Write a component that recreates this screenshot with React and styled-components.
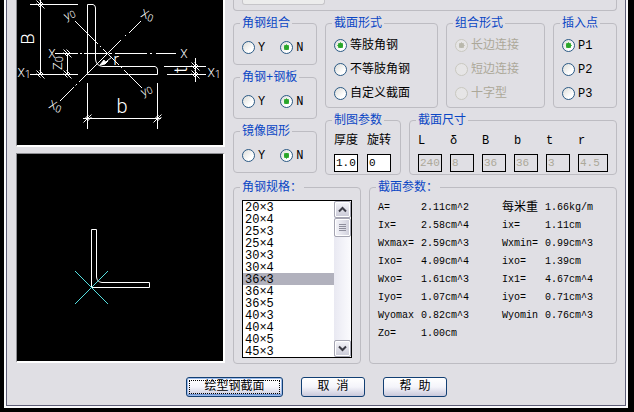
import React, { useState } from "react";
import styled, { createGlobalStyle, css } from "styled-components";

const face = "#e0dfe4";
const line = "#bdbcc2";
const cjk = '"Liberation Mono", "Noto Sans CJK SC", monospace';

const GlobalStyle = createGlobalStyle`
  * { box-sizing: border-box; }
  body {
    margin: 0;
    background: #000;
    color: #000;
    font: 12px/14px ${cjk};
  }
  button, input, select { font: inherit; color: inherit; }
`;

const Dialog = styled.form`
  margin: 0 6px 4px 4px;
  padding: 0 9px 9px 10px;
  background: ${face};
  border: 1px solid #fbfbfd;
  border-width: 0 2px 2px;
  box-shadow: inset 1px 0 #5f5f78, inset -1px 0 #5f5f78, inset 0 -1px #5f5f78;
`;

const Body = styled.div`
  display: flex;
  gap: 8px;
`;

const Previews = styled.div`
  flex: 0 0 209px;
  display: flex;
  flex-direction: column;
  gap: 6px;
`;

const Preview = styled.div`
  background: #000;
  border: 1px solid #8d8d92;
  border-width: 1px 2px 2px 1px;
  border-right-color: #fff;
  border-bottom-color: #fff;
  ${(p) => p.$cut && css`border-top: 0;`}
  svg { display: block; width: 100%; height: auto; }
`;

const Settings = styled.div`
  flex: 1;
  min-width: 0;
  display: flex;
  flex-direction: column;
  gap: 5px;
`;

const TopGroup = styled.div`
  height: 11px;
  padding-left: 8px;
  border: 1px solid ${line};
  border-top: 0;
  border-radius: 0 0 4px 4px;
`;

const TopField = styled.div`
  width: 83px;
  height: 5px;
  background: #ececec;
  border: 1px solid #c6c5c9;
  border-top: 0;
  border-radius: 0 0 3px 3px;
`;

const Row = styled.div`
  display: grid;
  grid-template-columns: ${(p) => p.$cols.map((n) => `minmax(0, ${n}fr)`).join(" ")};
  gap: 8px;
  align-items: ${(p) => p.$align || "stretch"};
`;

const Stack = styled.div`
  display: flex;
  flex-direction: column;
  gap: 5px;
`;

const Group = styled.fieldset`
  margin: 0;
  padding: ${(p) => p.$pad || "8px 8px 7px"};
  min-width: 0;
  border: 1px solid ${line};
  border-radius: 4px;
`;

const Legend = styled.legend`
  margin-left: -2px;
  padding: 0 2px;
  height: 14px;
  line-height: 16px;
  color: #0a46c4;
  white-space: nowrap;
`;

const Options = styled.div`
  display: flex;
  flex-direction: ${(p) => (p.$inline ? "row" : "column")};
  gap: ${(p) => (p.$inline ? "15px" : "10px")};
`;

const RadioLabel = styled.label`
  display: flex;
  align-items: center;
  gap: 3px;
  height: 14px;
  white-space: nowrap;
  color: ${(p) => (p.$disabled ? "#aca899" : "#000")};
`;

const RadioText = styled.span`
  padding-top: 2px;
`;

const RadioInput = styled.input.attrs({ type: "radio" })`
  appearance: none;
  flex: none;
  width: 13px;
  height: 13px;
  margin: 0;
  border: 1px solid #2b5a85;
  border-radius: 50%;
  background: linear-gradient(135deg, #dcdcd8, #fff 70%);
  &:checked {
    background: radial-gradient(circle, #2aa52a 0 2px, #6cc96c 3px, transparent 3px),
      linear-gradient(135deg, #dcdcd8, #fff 70%);
  }
  &:disabled { border-color: #c9c8c0; background: #e6e5e6; }
  &:disabled:checked {
    background: radial-gradient(circle, #b9b8ac 0 2px, #c9c8c0 3px, transparent 3px), #e6e5e6;
  }
`;

const Fields = styled.div`
  display: flex;
  gap: ${(p) => p.$gap};
`;

const Field = styled.label`
  display: flex;
  flex-direction: column;
  gap: 5px;
  width: ${(p) => (p.$wide ? "30px" : "24px")};
  line-height: 16px;
  white-space: nowrap;
`;

const TextBox = styled.input`
  width: 100%;
  height: 18px;
  margin: 0;
  padding: 0 0 0 1px;
  border: 1px solid #000;
  border-radius: 0;
  background: #fff;
  font-size: 11px;
  &:disabled { background: ${face}; color: #aca899; }
`;

const ListFrame = styled.div`
  display: flex;
  height: 158px;
  border: 1px solid #000;
  background: #fff;
`;

const List = styled.select`
  flex: 1;
  min-width: 0;
  height: 156px;
  margin: 0;
  padding: 0;
  border: 0;
  border-radius: 0;
  outline: 0;
  overflow: hidden;
  background: #fff;
  option {
    height: 12px;
    min-height: 12px;
    padding: 0 0 0 2px;
    line-height: 12px;
    color: #000;
  }
  option:checked { background: linear-gradient(#b1b1bd, #b1b1bd); color: #000; }
`;

const ScrollBar = styled.div`
  flex: 0 0 17px;
  display: flex;
  flex-direction: column;
  background: linear-gradient(90deg, #e9e9f2, #fbfbfe);
`;

const ScrollButton = styled.button`
  display: grid;
  place-items: center;
  height: 17px;
  padding: 0;
  border: 1px solid #a5a5b2;
  border-radius: 2px;
  box-shadow: inset 0 0 0 1px #fff;
  background: linear-gradient(#f5f5fa, #c9c9d6);
`;

const Thumb = styled.div`
  display: grid;
  place-items: center;
  height: 19px;
  margin-bottom: auto;
  border: 1px solid #a5a5b2;
  border-radius: 2px;
  box-shadow: inset 0 0 0 1px #fff;
  background: linear-gradient(90deg, #f5f5fa, #cfcfdb);
`;

const Params = styled.table`
  width: 100%;
  table-layout: fixed;
  border-collapse: collapse;
  font-size: 10px;
  th, td {
    height: 18px;
    padding: 2px 0 0;
    text-align: left;
    font-weight: normal;
    white-space: nowrap;
  }
`;

const NameCol = styled.col`
  width: 43px;
`;

const ValueCol = styled.col`
  width: 81px;
`;

const CjkName = styled.span`
  font-size: 12px;
`;

const Actions = styled.div`
  display: flex;
  justify-content: center;
  gap: 18px;
  margin-top: 13px;
`;

const Button = styled.button`
  width: ${(p) => (p.$primary ? "97px" : "64px")};
  height: 20px;
  padding: 0;
  line-height: 16px;
  border: 1px solid #123f73;
  border-radius: 3px;
  background: linear-gradient(#fff, #f4f4fa 50%, #c9c9dc);
  ${(p) =>
    p.$primary &&
    css`
      box-shadow: inset 0 0 0 1px #9dbbea, inset 0 -2px #6c92d2;
      outline: 1px dotted #000;
      outline-offset: -4px;
    `}
`;

const Sketch = styled.svg`
  fill: none;
  stroke: #fff;
  text {
    fill: #fff;
    stroke: none;
    font-family: Roboto, sans-serif;
    font-weight: 300;
    text-anchor: middle;
  }
`;

function Radio({ text, name, checked, disabled }) {
  return (
    <RadioLabel $disabled={disabled}>
      <RadioInput name={name} defaultChecked={checked} disabled={disabled} />
      <RadioText>{text}</RadioText>
    </RadioLabel>
  );
}

function YesNo({ title, name }) {
  return (
    <Group $pad="10px 8px">
      <Legend>{title}</Legend>
      <Options $inline>
        <Radio text="Y" name={name} />
        <Radio text="N" name={name} checked />
      </Options>
    </Group>
  );
}

function Choice({ title, name, items, disabled }) {
  return (
    <Group>
      <Legend>{title}</Legend>
      <Options>
        {items.map((t, i) => (
          <Radio key={t} text={t} name={name} checked={i === 0} disabled={disabled} />
        ))}
      </Options>
    </Group>
  );
}

function Fig({ x, y, size, turn = 0, children, sub }) {
  return (
    <text transform={`translate(${x} ${y}) rotate(${turn})`} fontSize={size}>
      {children}
      {sub && <tspan fontSize={size - 2} dy="1">{sub}</tspan>}
    </text>
  );
}

function DimensionSketch() {
  const ticks = [[40.5, 4.5], [40.5, 74.5], [67.5, 53.5], [67.5, 74.5], [195.5, 66.5], [195.5, 74.5]];
  return (
    <Sketch viewBox="17 0 206 145" role="img" aria-label="角钢尺寸示意图">
      <path d="M87.5 74.5V4.5H93Q95.5 5 95.5 8V59Q96 66 103 66.5H155Q157.5 67 157.5 70V74.5Z" />
      <path d="M40.5 0V74.5M30 4.5H78M30 74.5H78M67.5 53V75M164 66.5H206M167 74.5H206M195.5 58V82M83 118.5H161M87.5 83V129M157.5 83V129" />
      <path d="M55 53.5H78M80 53.5H82M84 53.5H107M109 53.5H112M115 53.5H147M150 53.5H152M156 53.5H176" />
      <path d="M60 101L74 87M75.500 85.500L77 84M79 82L121 40M125 36L126 35M129 33L141 21M75 21L98 44M100 46L101 47M103 49L119 65M121 67L122 68M124 70L142 88" />
      {ticks.map(([x, y]) => (
        <path key={`${x},${y}`} d={`M${x - 4} ${y - 4}l8 8M${x - 1} ${y - 4}l4 4M${x - 4} ${y - 1}l4 4`} />
      ))}
      {[87.5, 157.5].map((x) => (
        <path key={x} d={`M${x - 4} 122.500l8 -8M${x - 3} 119l4 -4M${x} 121l4 -4`} />
      ))}
      <path d="M100 65L104 60L105 62L108 61L105 64Z" fill="#fff" />
      <path d="M107 61L112 57" />
      <Fig x={34} y={39} size={19} turn={-90}>B</Fig>
      <Fig x={122} y={113} size={20}>b</Fig>
      <Fig x={116} y={65} size={17}>r</Fig>
      <Fig x={187} y={70} size={19} turn={-90}>t</Fig>
      <Fig x={52} y={58} size={12}>X</Fig>
      <Fig x={184} y={58} size={12}>X</Fig>
      <Fig x={24} y={77} size={12} sub="1">X</Fig>
      <Fig x={214} y={77} size={12} sub="1">X</Fig>
      <Fig x={62} y={63} size={13} turn={-90} sub="0">Z</Fig>
      <Fig x={54} y={110} size={12} turn={20} sub="0">X</Fig>
      <Fig x={146} y={19} size={12} turn={20} sub="0">X</Fig>
      <Fig x={71} y={18} size={12} turn={-25} sub="0">y</Fig>
      <Fig x={148} y={94} size={12} turn={-25} sub="0">y</Fig>
    </Sketch>
  );
}

function SectionSketch() {
  return (
    <Sketch viewBox="17 154 206 207" role="img" aria-label="截面预览">
      <path d="M91.5 287.5V229.5H96.5V277Q97 282 102 282.500H149.5V287.5Z" />
      <path stroke="#55dfe0" d="M75 271L108 304M108 271L75 304" />
    </Sketch>
  );
}

function Chevron({ down }) {
  return (
    <svg width="9" height="7" viewBox="0 0 9 7" fill="none" stroke="#3c3c46" strokeWidth="2">
      <path d={down ? "M1 1.500L4.500 5L8 1.500" : "M1 5.500L4.500 2L8 5.500"} />
    </svg>
  );
}

const sizes = ["20×3", "20×4", "25×3", "25×4", "30×3", "30×4", "36×3", "36×4", "36×5", "40×3", "40×4", "40×5", "45×3"];

const dimensions = [["L", "240"], ["δ", "8"], ["B", "36"], ["b", "36"], ["t", "3"], ["r", "4.5"]];

const params = [
  ["A=", "2.11cm^2", "每米重", "1.66kg/m"],
  ["Ix=", "2.58cm^4", "ix=", "1.11cm"],
  ["Wxmax=", "2.59cm^3", "Wxmin=", "0.99cm^3"],
  ["Ixo=", "4.09cm^4", "ixo=", "1.39cm"],
  ["Wxo=", "1.61cm^3", "Ix1=", "4.67cm^4"],
  ["Iyo=", "1.07cm^4", "iyo=", "0.71cm^3"],
  ["Wyomax", "0.82cm^3", "Wyomin", "0.76cm^3"],
  ["Zo=", "1.00cm", "", ""],
];

function SizeList() {
  const [index, setIndex] = useState(6);
  const step = (d) => setIndex((i) => Math.min(sizes.length - 1, Math.max(0, i + d)));
  return (
    <Group $pad="6px 8px 5px">
      <Legend>角钢规格：</Legend>
      <ListFrame>
        <List
          size={13}
          aria-label="角钢规格"
          value={sizes[index]}
          onChange={(e) => setIndex(sizes.indexOf(e.target.value))}
        >
          {sizes.map((s) => <option key={s}>{s}</option>)}
        </List>
        <ScrollBar>
          <ScrollButton type="button" aria-label="向上" onClick={() => step(-1)}><Chevron /></ScrollButton>
          <Thumb>
            <svg width="7" height="8" viewBox="0 0 7 8" stroke="#8e8e9c">
              <path d="M0 .5H7M0 2.500H7M0 4.500H7M0 6.500H7" />
            </svg>
          </Thumb>
          <ScrollButton type="button" aria-label="向下" onClick={() => step(1)}><Chevron down /></ScrollButton>
        </ScrollBar>
      </ListFrame>
    </Group>
  );
}

export default function App() {
  return (
    <>
      <GlobalStyle />
      <Dialog onSubmit={(e) => e.preventDefault()}>
        <Body>
          <Previews>
            <Preview $cut><DimensionSketch /></Preview>
            <Preview><SectionSketch /></Preview>
          </Previews>
          <Settings>
            <TopGroup><TopField /></TopGroup>
            <Row $cols={[84, 292]} $align="start">
              <Stack>
                <YesNo title="角钢组合" name="combine" />
                <YesNo title="角钢+钢板" name="plate" />
                <YesNo title="镜像图形" name="mirror" />
              </Stack>
              <Stack>
                <Row $cols={[113, 99, 64]}>
                  <Choice title="截面形式" name="shape" items={["等肢角钢", "不等肢角钢", "自定义截面"]} />
                  <Choice title="组合形式" name="joint" items={["长边连接", "短边连接", "十字型"]} disabled />
                  <Choice title="插入点" name="origin" items={["P1", "P2", "P3"]} />
                </Row>
                <Row $cols={[76, 208]}>
                  <Group $pad="6px 8px 2px">
                    <Legend>制图参数</Legend>
                    <Fields $gap="9px">
                      <Field>厚度<TextBox defaultValue="1.0" /></Field>
                      <Field>旋转<TextBox defaultValue="0" /></Field>
                    </Fields>
                  </Group>
                  <Group $pad="6px 8px 2px">
                    <Legend>截面尺寸</Legend>
                    <Fields $gap="8px">
                      {dimensions.map(([k, v]) => (
                        <Field key={k} $wide={k === "r"}>
                          {k}
                          <TextBox defaultValue={v} disabled />
                        </Field>
                      ))}
                    </Fields>
                  </Group>
                </Row>
              </Stack>
            </Row>
            <Row $cols={[128, 248]}>
              <SizeList />
              <Group $pad="4px 0 4px 8px">
                <Legend>截面参数：</Legend>
                <Params>
                  <colgroup><NameCol /><ValueCol /><NameCol /><col /></colgroup>
                  <tbody>
                    {params.map(([a, b, c, d]) => (
                      <tr key={a}>
                        <th scope="row">{a}</th>
                        <td>{b}</td>
                        {c ? <th scope="row">{c === "每米重" ? <CjkName>{c}</CjkName> : c}</th> : <td />}
                        <td>{d}</td>
                      </tr>
                    ))}
                  </tbody>
                </Params>
              </Group>
            </Row>
          </Settings>
        </Body>
        <Actions>
          <Button type="submit" $primary>绘型钢截面</Button>
          <Button type="button">取 消</Button>
          <Button type="button">帮 助</Button>
        </Actions>
      </Dialog>
    </>
  );
}
